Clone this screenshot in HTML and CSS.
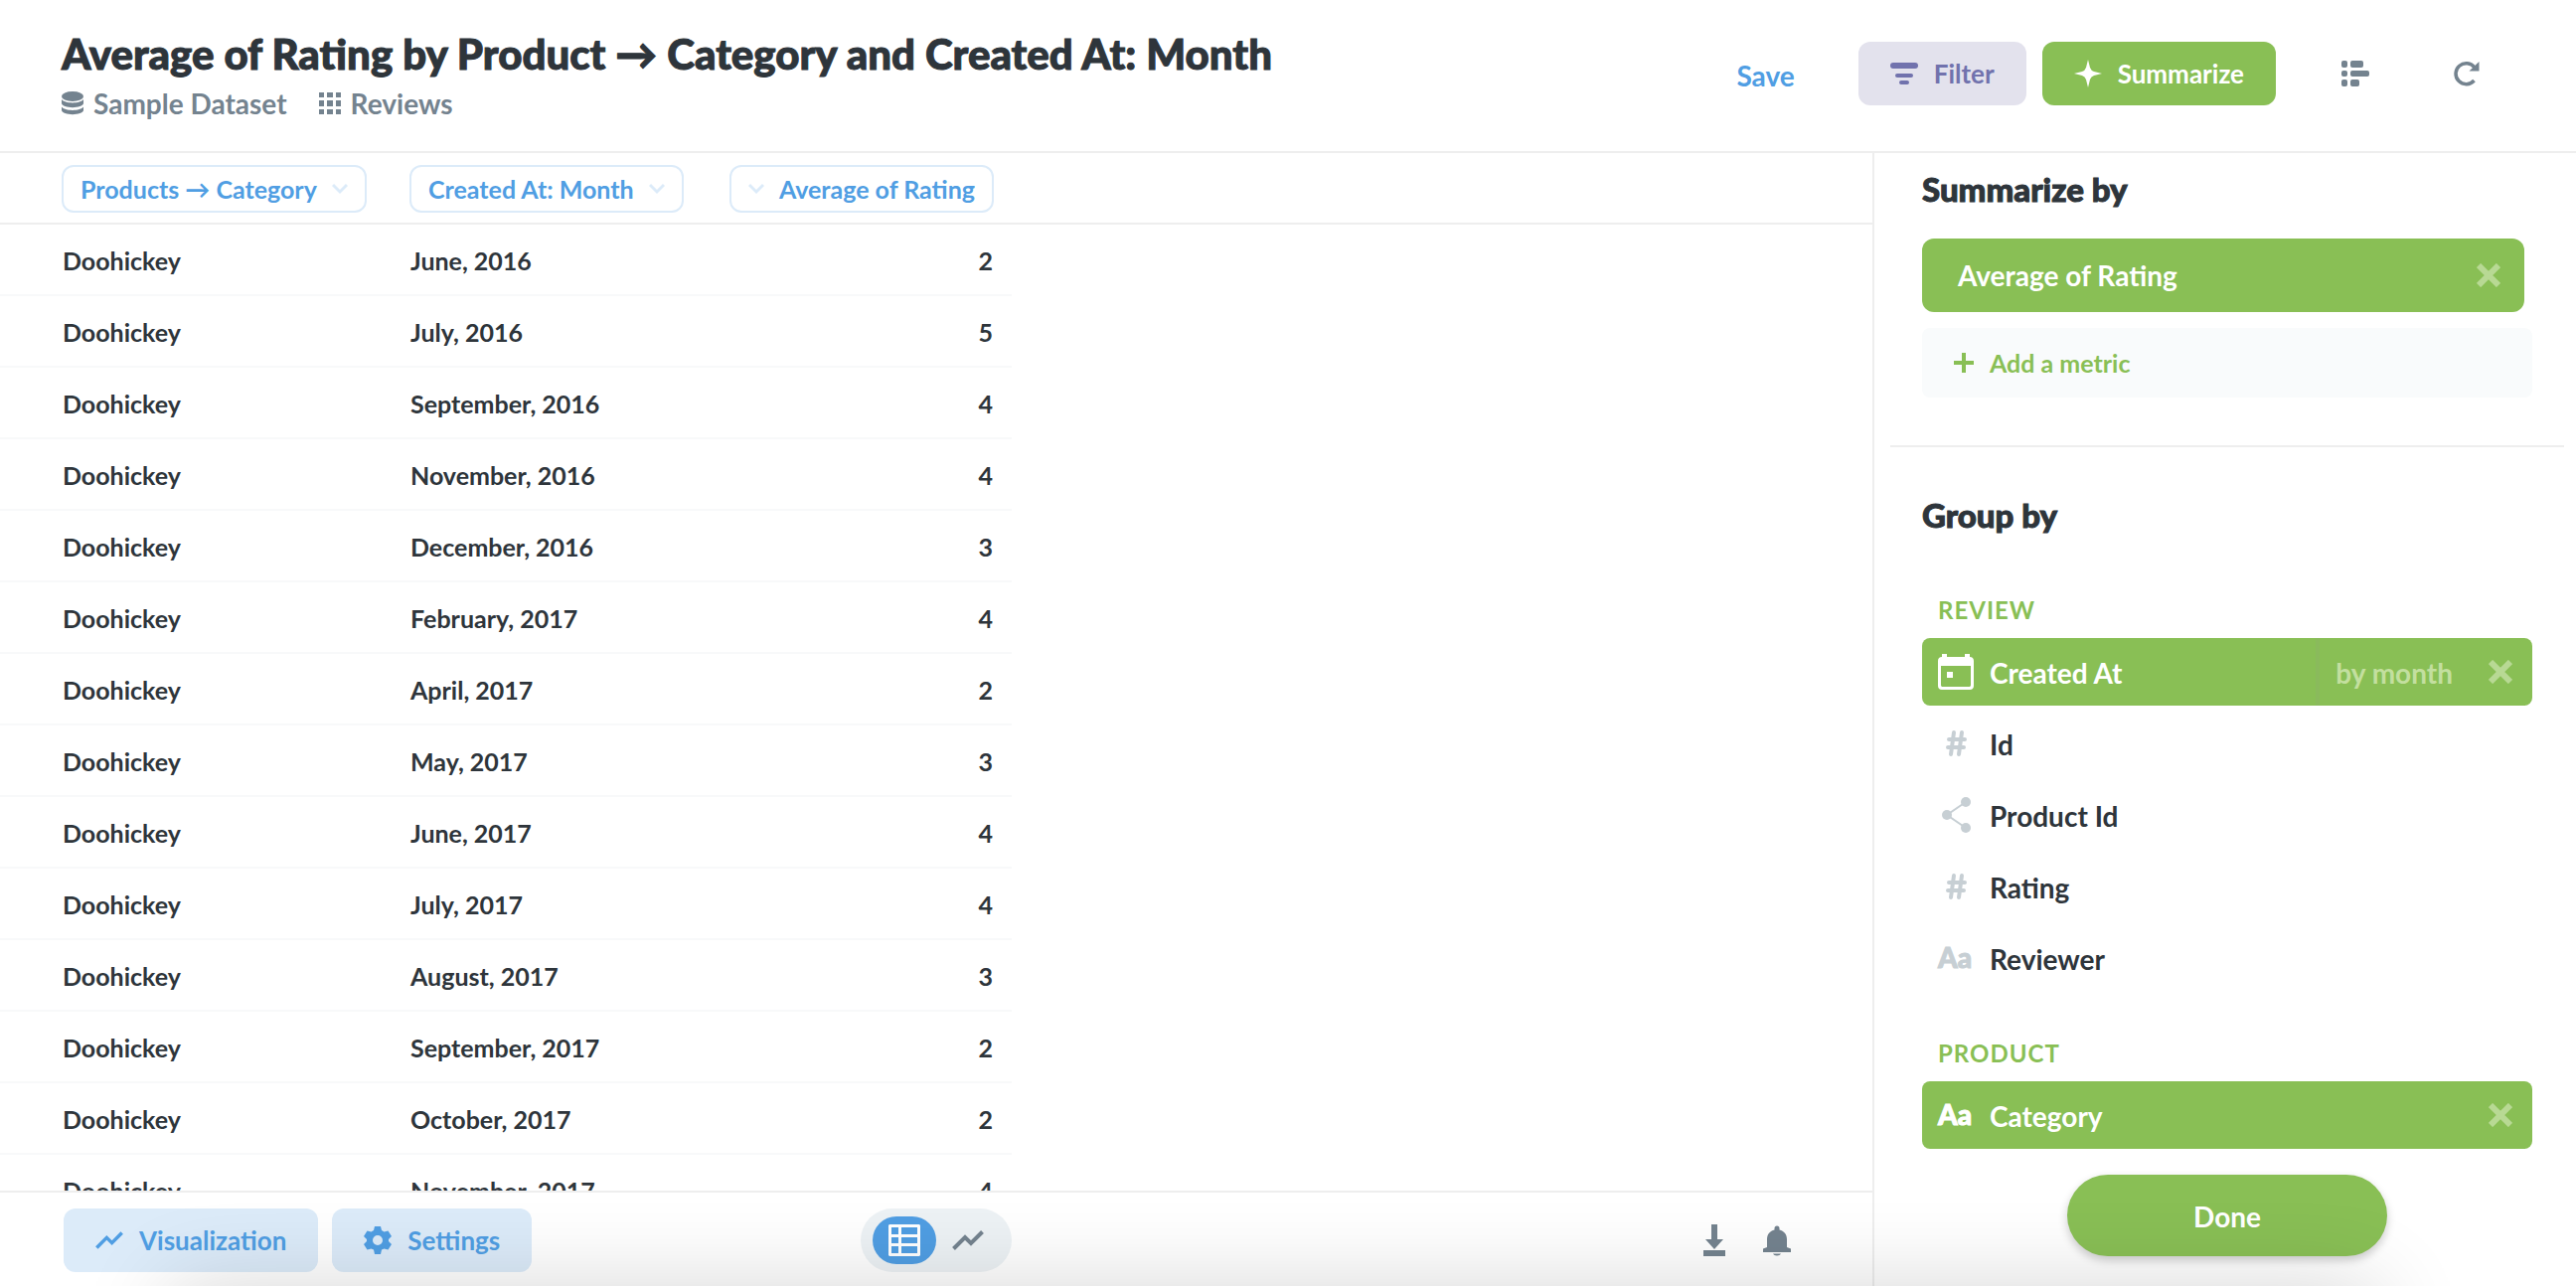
FILE: index.html
```html
<!DOCTYPE html>
<html lang="en">
<head>
    <meta charset="UTF-8">
    <meta name="viewport" content="width=device-width, initial-scale=1.0">
    <title>Average of Rating</title>
    <link rel="stylesheet" href="styles.css">
</head>
<body>

    <!-- Icons used more than once -->
    <svg class="hidden">
        <symbol id="chevron" viewBox="0 0 16 12"><path d="M1 2l7 7 7-7" fill="none" stroke="currentColor" stroke-width="3"/></symbol>
        <symbol id="close" viewBox="0 0 24 24"><path d="M2 2l20 20M22 2L2 22" fill="none" stroke="currentColor" stroke-width="6"/></symbol>
        <symbol id="line" viewBox="0 0 32 20"><path d="M1.500 18.500L13 7l6 6L30.500 1.500" fill="none" stroke="currentColor" stroke-width="4"/></symbol>
        <symbol id="number" viewBox="0 0 36 36"><path d="M16 7l-3 22M24 7l-3 22M11 14h16M10 22h16" fill="none" stroke="currentColor" stroke-width="4" stroke-linecap="round"/></symbol>
    </svg>

    <!-- Header -->
    <header class="header">
        <div class="heading">
            <h1>Average of Rating by Product → Category and Created At: Month</h1>
            <div class="crumbs">
                <a href="#">
                    <svg width="22" height="24" viewBox="0 0 22 24" fill="currentColor"><ellipse cx="11" cy="5" rx="11" ry="5"/><path d="M0 8c3 4.500 19 4.500 22 0v4c-1 5.500-21 5.500-22 0zM0 15.500c3 4.500 19 4.500 22 0V19c-1 5.500-21 5.500-22 0z"/></svg>
                    Sample Dataset
                </a>
                <a href="#">
                    <svg width="22" height="22" viewBox="0 0 22 22" fill="currentColor"><path d="M0 0h5v5H0zM8 0h6v5H8zM17 0h5v5h-5zM0 8h5v6H0zM8 8h6v6H8zM17 8h5v6h-5zM0 17h5v5H0zM8 17h6v5H8zM17 17h5v5h-5z"/></svg>
                    Reviews
                </a>
            </div>
        </div>
        <div class="actions">
            <a class="save" href="#">Save</a>
            <button class="btn btn-filter">
                <svg width="28" height="22" viewBox="0 0 28 22" fill="currentColor"><rect width="28" height="6" rx="3"/><rect x="5" y="11" width="18" height="4" rx="2"/><rect x="9" y="18" width="10" height="4" rx="2"/></svg>
                Filter
            </button>
            <button class="btn btn-summarize">
                <svg width="28" height="28" viewBox="0 0 28 28" fill="currentColor"><path d="M14 0l2 8q1 3 4 4l8 2-8 2q-3 1-4 4l-2 8-2-8q-1-3-4-4l-8-2 8-2q3-1 4-4z"/></svg>
                Summarize
            </button>
            <button class="icon-btn" aria-label="Show editor">
                <svg width="28" height="26" viewBox="0 0 28 26" fill="currentColor"><rect width="6" height="7" rx="2"/><rect x="9" width="13" height="7" rx="2"/><rect y="10" width="6" height="6" rx="2"/><rect x="9" y="10" width="19" height="6" rx="2"/><rect y="19" width="6" height="7" rx="2"/><rect x="9" y="19" width="9" height="7" rx="2"/></svg>
            </button>
            <button class="icon-btn" aria-label="Refresh">
                <svg width="26" height="26" viewBox="0 0 26 26"><path d="M20.500 20a10.500 10.500 0 1 1 .5-13" fill="none" stroke="currentColor" stroke-width="3.500"/><path d="M25.500 1v9.500H15.500z" fill="currentColor"/></svg>
            </button>
        </div>
    </header>

    <div class="content">
        <main class="main">
            <!-- Results -->
            <div class="results">
                <table>
                    <thead>
                        <tr>
                            <th class="col-category"><button class="pill">Products → Category <svg width="16" height="12"><use href="#chevron"/></svg></button></th>
                            <th class="col-month"><button class="pill">Created At: Month <svg width="16" height="12"><use href="#chevron"/></svg></button></th>
                            <th class="col-rating"><button class="pill"><svg width="16" height="12"><use href="#chevron"/></svg> Average of Rating</button></th>
                            <th></th>
                        </tr>
                    </thead>
                    <tbody>
                        <tr><td>Doohickey</td><td>June, 2016</td><td>2</td></tr>
                        <tr><td>Doohickey</td><td>July, 2016</td><td>5</td></tr>
                        <tr><td>Doohickey</td><td>September, 2016</td><td>4</td></tr>
                        <tr><td>Doohickey</td><td>November, 2016</td><td>4</td></tr>
                        <tr><td>Doohickey</td><td>December, 2016</td><td>3</td></tr>
                        <tr><td>Doohickey</td><td>February, 2017</td><td>4</td></tr>
                        <tr><td>Doohickey</td><td>April, 2017</td><td>2</td></tr>
                        <tr><td>Doohickey</td><td>May, 2017</td><td>3</td></tr>
                        <tr><td>Doohickey</td><td>June, 2017</td><td>4</td></tr>
                        <tr><td>Doohickey</td><td>July, 2017</td><td>4</td></tr>
                        <tr><td>Doohickey</td><td>August, 2017</td><td>3</td></tr>
                        <tr><td>Doohickey</td><td>September, 2017</td><td>2</td></tr>
                        <tr><td>Doohickey</td><td>October, 2017</td><td>2</td></tr>
                        <tr><td>Doohickey</td><td>November, 2017</td><td>4</td></tr>
                    </tbody>
                </table>
            </div>

            <!-- Footer -->
            <footer class="footer">
                <div class="footer-left">
                    <button class="btn btn-blue">
                        <svg width="28" height="18"><use href="#line"/></svg>
                        Visualization
                    </button>
                    <button class="btn btn-blue">
                        <svg width="28" height="28" viewBox="0 0 28 28" fill="currentColor" fill-rule="evenodd"><path d="M11 0h6l1 4 2.500 1.500L24.500 4.500l3.500 5.500-3 3v2l3 3-3.500 5.500-4-1L18 23.500 17 28h-6l-1-4.500L7.500 22.500l-4 1L0 18l3-3v-2l-3-3 3.500-5.500 4 1L10 4zM14 9a5 5 0 1 0 0 10 5 5 0 0 0 0-10z"/></svg>
                        Settings
                    </button>
                </div>
                <div class="toggle">
                    <button class="active" aria-label="Table">
                        <svg width="32" height="32" viewBox="0 0 32 32" fill="currentColor" fill-rule="evenodd"><path d="M1 0h30l1 1v30l-1 1H1l-1-1V1zM3 3v7h7V3zM13 3v7h16V3zM3 13v6h7v-6zM13 13v6h16v-6zM3 22v7h7v-7zM13 22v7h16v-7z"/></svg>
                    </button>
                    <button aria-label="Chart"><svg width="32" height="20"><use href="#line"/></svg></button>
                </div>
                <div class="footer-right">
                    <button class="icon-btn" aria-label="Download">
                        <svg width="22" height="32" viewBox="0 0 22 32" fill="currentColor"><path d="M8 0h6v15h6L11 25 2 15h6zM0 26h22v6H0z"/></svg>
                    </button>
                    <button class="icon-btn" aria-label="Alerts">
                        <svg width="28" height="31" viewBox="0 0 28 31" fill="currentColor"><path d="M11.500 3a2.500 2.500 0 0 1 5 0v1.500C21 5.500 24 9 24 14v8l4 1.500V27H0v-3.500L4 22v-8c0-5 3-8.500 7.500-9.500zM10 28.500h8c-1 2.500-7 2.500-8 0z"/></svg>
                    </button>
                </div>
            </footer>
        </main>

        <!-- Summarize sidebar -->
        <aside class="sidebar">
            <section class="metrics">
                <h2>Summarize by</h2>
                <div class="metric">
                    <span>Average of Rating</span>
                    <button class="close" aria-label="Remove Average of Rating"><svg width="24" height="24"><use href="#close"/></svg></button>
                </div>
                <button class="add-metric">
                    <svg width="20" height="20" viewBox="0 0 20 20" fill="currentColor"><path d="M8 0h4v8h8v4h-8v8H8v-8H0V8h8z"/></svg>
                    Add a metric
                </button>
            </section>
            <section class="groups">
                <h2>Group by</h2>
                <h3>Review</h3>
                <ul>
                    <li class="selected">
                        <svg class="type" width="36" height="36" viewBox="0 0 36 36" fill="currentColor" fill-rule="evenodd"><path d="M4 0h5v3h18V0h5v3c2.500 0 4 1.500 4 4v25c0 2.500-1.500 4-4 4H4c-2.500 0-4-1.500-4-4V7c0-2.500 1.500-4 4-4zM3 12v19c0 1.500.5 2 2 2h26c1.500 0 2-.5 2-2V12zM9 18h6v6H9z"/></svg>
                        <span class="name">Created At</span>
                        <button class="bucket">by month</button>
                        <button class="close" aria-label="Remove Created At"><svg width="24" height="24"><use href="#close"/></svg></button>
                    </li>
                    <li>
                        <svg class="type" width="36" height="36"><use href="#number"/></svg>
                        <span class="name">Id</span>
                    </li>
                    <li>
                        <svg class="type" width="36" height="36" viewBox="0 0 36 36" fill="currentColor"><path d="M28 5L9 18l19 13" fill="none" stroke="currentColor" stroke-width="2"/><circle cx="28" cy="5" r="5"/><circle cx="9" cy="18" r="5"/><circle cx="28" cy="31" r="5"/></svg>
                        <span class="name">Product Id</span>
                    </li>
                    <li>
                        <svg class="type" width="36" height="36"><use href="#number"/></svg>
                        <span class="name">Rating</span>
                    </li>
                    <li>
                        <span class="type type-text">Aa</span>
                        <span class="name">Reviewer</span>
                    </li>
                </ul>
                <h3>Product</h3>
                <ul>
                    <li class="selected">
                        <span class="type type-text">Aa</span>
                        <span class="name">Category</span>
                        <button class="close" aria-label="Remove Category"><svg width="24" height="24"><use href="#close"/></svg></button>
                    </li>
                </ul>
            </section>
            <button class="done">Done</button>
        </aside>
    </div>

    <div class="bottom-shade"></div>

</body>
</html>
```

FILE: styles.css
```css
* {
    box-sizing: border-box;
    margin: 0;
    padding: 0;
}
body {
    display: flex;
    flex-direction: column;
    height: 100vh;
    overflow: hidden;
    background: #fff;
    color: #2e353b;
    font-family: Lato, "Liberation Sans", sans-serif;
    font-size: 28px;
    font-weight: 700;
}
button {
    border: none;
    background: none;
    color: inherit;
    font: inherit;
    cursor: pointer;
}
a {
    color: inherit;
    text-decoration: none;
}
ul {
    list-style: none;
}
svg {
    flex: none;
    display: block;
}
.hidden {
    display: none;
}
h1, h2, .type-text {
    font-weight: 900;
    -webkit-text-stroke: 1px currentColor;
}

/* Header */
.header {
    display: flex;
    justify-content: space-between;
    flex: none;
    height: 154px;
    padding: 28px 94px 0 62px;
    border-bottom: 2px solid #eeeeee;
}
h1 {
    font-size: 42px;
    line-height: 52px;
}
.crumbs {
    display: flex;
    gap: 32px;
    line-height: 48px;
    color: #74838f;
}
.crumbs a {
    display: flex;
    align-items: center;
    gap: 10px;
}
.actions {
    display: flex;
    align-items: center;
    height: 64px;
    margin-top: 14px;
}
.save {
    margin-right: 64px;
    padding-top: 3px;
    color: #509ee3;
}
.btn {
    display: flex;
    align-items: center;
    gap: 16px;
    height: 64px;
    padding: 0 32px;
    border-radius: 12px;
    font-size: 26px;
}
.btn-filter {
    margin-right: 16px;
    background: #e3e2ed;
    color: #7172ad;
}
.btn-summarize {
    margin-right: 32px;
    background: #89bf55;
    color: #fff;
}
.btn-blue {
    background: #dcebf9;
    color: #509ee3;
}
.icon-btn {
    display: flex;
    align-items: center;
    justify-content: center;
    color: #74838f;
}
.actions .icon-btn {
    width: 96px;
    height: 64px;
}
.actions .icon-btn:last-child {
    margin: 0 -32px 0 16px;
}

/* Results */
.content {
    display: flex;
    flex: 1;
    min-height: 0;
}
.main {
    display: flex;
    flex-direction: column;
    flex: 1;
    min-width: 0;
}
.results {
    flex: 1;
    min-height: 0;
    overflow: hidden;
}
table {
    width: 100%;
    border-collapse: separate;
    border-spacing: 0;
    table-layout: fixed;
    font-size: 25px;
}
th {
    height: 72px;
    padding-top: 2px;
    border-bottom: 2px solid #eeeeee;
    text-align: left;
}
td {
    height: 72px;
    padding-top: 2px;
    border-bottom: 2px solid #f8f9fa;
}
.col-category {
    width: 392px;
    padding-left: 62px;
}
.col-month {
    width: 320px;
    padding-left: 20px;
}
.col-rating {
    width: 306px;
    padding-right: 18px;
    text-align: right;
}
td:nth-child(1) {
    padding-left: 63px;
}
td:nth-child(2) {
    padding-left: 21px;
}
td:nth-child(3) {
    padding-right: 19px;
    text-align: right;
}
.pill {
    display: inline-flex;
    align-items: center;
    gap: 15px;
    height: 48px;
    padding: 0 17px;
    border: 2px solid #dcebf9;
    border-radius: 12px;
    color: #509ee3;
    white-space: nowrap;
    vertical-align: middle;
}
.pill svg {
    color: #dcebf9;
}

/* Footer */
.footer {
    display: grid;
    grid-template-columns: 1fr auto 1fr;
    align-items: center;
    flex: none;
    padding: 16px 0 14px;
    border-top: 2px solid #eeeeee;
}
.footer-left {
    display: flex;
    gap: 14px;
    padding-left: 64px;
}
.footer-right {
    display: flex;
    justify-content: flex-end;
    gap: 38px;
    padding-right: 82px;
}
.toggle {
    display: flex;
    height: 64px;
    padding: 8px 12px;
    border-radius: 32px;
    background: #edf2f5;
    color: #74838f;
}
.toggle button {
    display: flex;
    align-items: center;
    justify-content: center;
    width: 64px;
    border-radius: 24px;
}
.toggle .active {
    background: #509ee3;
    color: #fff;
}

/* Sidebar */
.sidebar {
    flex: none;
    width: 708px;
    padding: 0 12px 0 16px;
    border-left: 2px solid #eeeeee;
}
.metrics {
    padding: 16px 32px 48px;
    border-bottom: 2px solid #eeeeee;
}
.groups {
    padding: 48px 32px 0;
}
h2 {
    font-size: 33px;
    line-height: 40px;
}
.metric {
    display: flex;
    align-items: center;
    justify-content: space-between;
    height: 74px;
    margin: 30px 8px 16px 0;
    padding: 0 24px 0 36px;
    border-radius: 12px;
    background: #89bf55;
    color: #fff;
}
.close {
    color: #b8d994;
}
.add-metric {
    display: flex;
    align-items: center;
    gap: 16px;
    width: 100%;
    height: 70px;
    padding-left: 32px;
    border-radius: 8px;
    background: #f9fbfc;
    color: #89bf55;
    font-size: 25px;
}
h3 {
    padding-left: 16px;
    color: #89bf55;
    font-size: 24px;
    line-height: 32px;
    letter-spacing: 1px;
    text-transform: uppercase;
}
h2 + h3 {
    margin-top: 60px;
}
.groups ul {
    margin-top: 12px;
}
.groups ul + h3 {
    margin-top: 46px;
}
.groups li {
    display: flex;
    align-items: center;
    height: 68px;
    margin-bottom: 4px;
    padding: 0 20px 0 16px;
    border-radius: 8px;
}
.groups .selected {
    background: #89bf55;
    color: #fff;
}
.type {
    width: 36px;
    margin-right: 16px;
    color: #c7cfd4;
}
.type-text {
    padding-bottom: 2px;
    line-height: 36px;
}
.selected .type {
    color: #fff;
}
.name {
    flex: 1;
    padding-top: 2px;
}
.bucket {
    align-self: stretch;
    margin-right: 20px;
    padding: 2px 16px 0;
    border-left: 4px solid #8aba5c;
    color: #c3df9f;
}
.done {
    display: block;
    width: 322px;
    height: 82px;
    margin: 26px auto 0;
    padding-top: 2px;
    border-radius: 41px;
    background: #89bf55;
    box-shadow: 0 4px 10px rgba(0, 0, 0, 0.2);
    color: #fff;
}

/* Soft shade along the window's lower edge */
.bottom-shade {
    position: fixed;
    top: 100%;
    left: 170px;
    right: 200px;
    height: 200px;
    box-shadow: 0 0 90px rgba(0, 0, 0, 0.16);
    pointer-events: none;
}
```
